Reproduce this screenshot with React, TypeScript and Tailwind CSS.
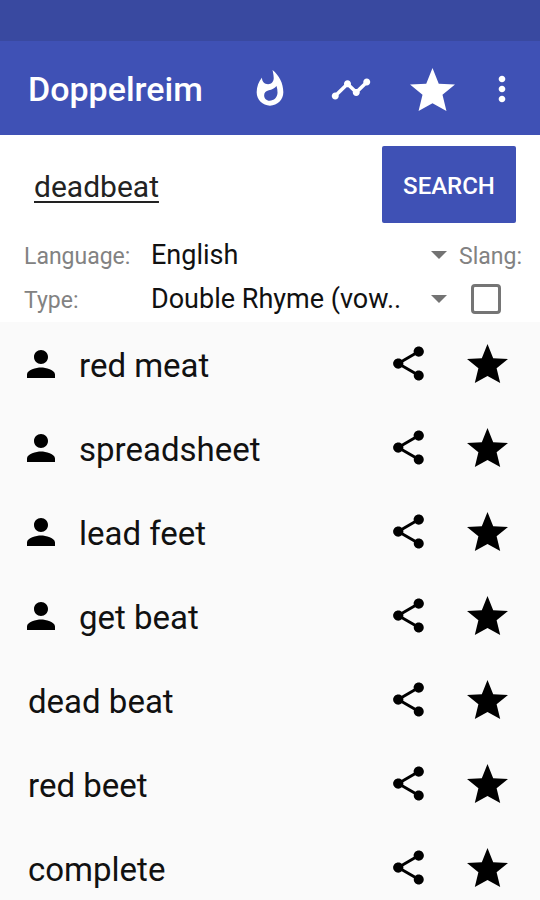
import { useState } from "react";
import { MdMoreVert, MdPerson, MdShare, MdTimeline, MdWhatshot } from "react-icons/md";

const RESULTS = [
  { word: "red meat", byUser: true },
  { word: "spreadsheet", byUser: true },
  { word: "lead feet", byUser: true },
  { word: "get beat", byUser: true },
  { word: "dead beat", byUser: false },
  { word: "red beet", byUser: false },
  { word: "complete", byUser: false },
];

function Star({ className }: { className: string }) {
  return (
    <svg viewBox="0 0 41 39" fill="currentColor" className={className} aria-hidden="true">
      <path d="M20.5 0 L26.2 14.2 L41 14.9 L29.6 24.2 L33.2 39 L20.5 32 L7.8 39 L11.4 24.2 L0 14.9 L14.8 14.2 Z" />
    </svg>
  );
}

function Caret() {
  return (
    <svg viewBox="0 0 16 8" className="pointer-events-none col-start-1 row-start-1 h-2 w-4 self-center justify-self-end text-[#737373]" aria-hidden="true">
      <path d="M0 0h16l-8 8z" fill="currentColor" />
    </svg>
  );
}

function Header() {
  return (
    <header className="bg-[#3f51b5] text-white">
      <div className="h-[41px] bg-[#3949a0]" />
      <div className="flex h-[94px] items-center pt-0.5 pr-4 pl-7">
        <h1 className="flex-1 text-[34px] font-medium">Doppelreim</h1>
        <nav className="flex items-center">
          <button type="button" aria-label="Popular" className="flex w-20 justify-center">
            <MdWhatshot className="size-10" />
          </button>
          <button type="button" aria-label="Trends" className="flex w-[82px] justify-center">
            <MdTimeline className="size-[42px]" />
          </button>
          <button type="button" aria-label="Favorites" className="flex w-20 justify-center">
            <Star className="h-[43px] w-[45px]" />
          </button>
          <button type="button" aria-label="More options" className="-mr-2 flex w-[60px] justify-center">
            <MdMoreVert className="size-10" />
          </button>
        </nav>
      </div>
    </header>
  );
}

function SearchForm() {
  const [query, setQuery] = useState("deadbeat");

  return (
    <form className="bg-white pr-4 pl-6" onSubmit={(e) => e.preventDefault()}>
      <div className="flex items-center gap-4 pt-[11px] pr-2 pl-[10px]">
        <input
          type="text"
          aria-label="Word"
          value={query}
          onChange={(e) => setQuery(e.target.value)}
          className="min-w-0 flex-1 pt-1 text-[30px] text-[#222] underline decoration-2 underline-offset-4 outline-none"
        />
        <button type="submit" className="h-[77px] w-[134px] rounded-xs bg-[#3f51b5] pt-0.5 text-[24px] font-medium text-white">
          SEARCH
        </button>
      </div>
      <div className="flex gap-3 pt-[10px] pr-0.5 pb-[1px]">
        <div className="grid min-w-0 flex-1 grid-cols-[127px_1fr] items-center">
          <label htmlFor="language" className="h-11 pt-1 text-[23px] leading-[40px] text-[#828282]">
            Language:
          </label>
          <div className="grid">
            <select id="language" className="col-start-1 row-start-1 h-11 w-full appearance-none pr-8 text-[27px] text-[#111]">
              <option>English</option>
            </select>
            <Caret />
          </div>
          <label htmlFor="type" className="h-11 pt-1 text-[23px] leading-[40px] text-[#828282]">
            Type:
          </label>
          <div className="grid">
            <select id="type" className="col-start-1 row-start-1 h-11 w-full appearance-none pr-8 text-[27px] text-[#111]">
              <option>Double Rhyme (vow..</option>
            </select>
            <Caret />
          </div>
        </div>
        <div className="flex flex-col">
          <label htmlFor="slang" className="h-11 pt-1 text-[23px] leading-[40px] text-[#828282]">
            Slang:
          </label>
          <div className="flex h-11 items-center pl-3">
            <input id="slang" type="checkbox" className="size-[30px] appearance-none rounded-sm border-3 border-[#757575] checked:bg-[#3f51b5]" />
          </div>
        </div>
      </div>
    </form>
  );
}

export default function App() {
  return (
    <div className="min-h-screen bg-[#fafafa] font-['Roboto',sans-serif]">
      <Header />
      <main>
        <SearchForm />
        <ul>
          {RESULTS.map(({ word, byUser }) => (
            <li key={word} className="flex h-[84px] items-center pr-8 pl-7 text-black">
              {byUser && (
                <span className="flex w-[51px]">
                  <MdPerson className="-ml-2 size-[42px]" />
                </span>
              )}
              <span className="flex-1 pt-1 text-[33px] text-[#111]">{word}</span>
              <button type="button" aria-label={`Share ${word}`} className="mr-[38px] pb-0.5">
                <MdShare className="size-[41px]" />
              </button>
              <button type="button" aria-label={`Save ${word}`} className="pb-0.5">
                <Star className="h-[39px] w-[41px]" />
              </button>
            </li>
          ))}
        </ul>
      </main>
    </div>
  );
}
